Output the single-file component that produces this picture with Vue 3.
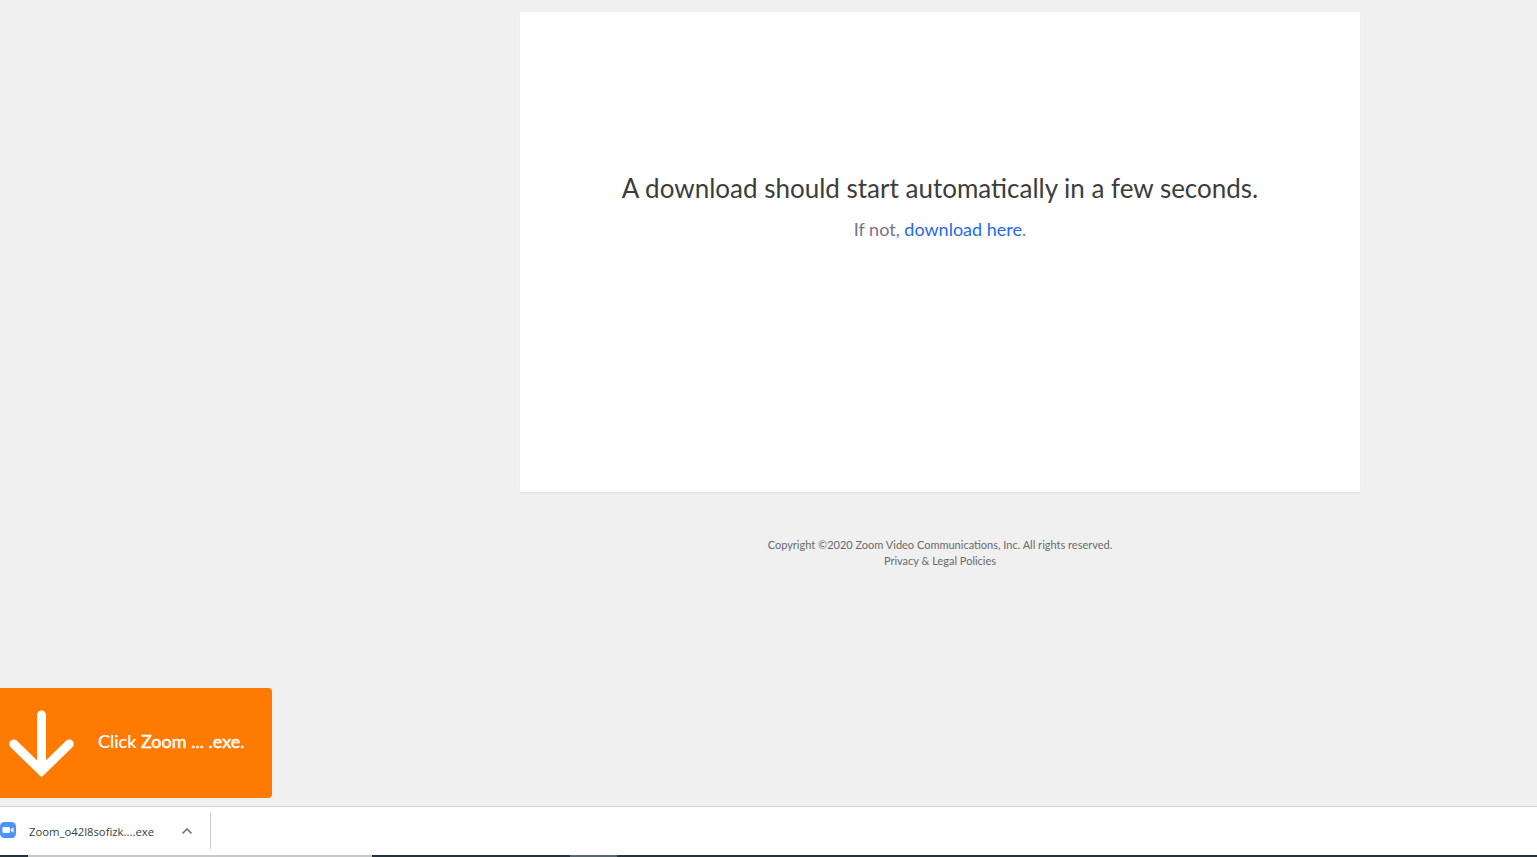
<script setup>
</script>

<template>
  <div class="page">
    <main class="main">
      <section class="card">
        <h1 class="title">A download should start automatically in a few seconds.</h1>
        <p class="sub">If not, <a class="link">download here</a>.</p>
      </section>
      <footer class="foot">
        <div>Copyright ©2020 Zoom Video Communications, Inc. All rights reserved.</div>
        <div>Privacy &amp; Legal Policies</div>
      </footer>
      <div class="banner">
        <svg class="arrow" width="66" height="68" viewBox="0 0 66 68">
          <path d="M32.500 6V60M4.800 35L32.500 62L60.200 35" fill="none" stroke="#fff" stroke-width="9" stroke-linecap="round" stroke-linejoin="miter"/>
        </svg>
        <span class="banner-text">Click <b class="bold">Zoom ... .exe.</b></span>
      </div>
    </main>
    <div class="shelf">
      <div class="item">
        <svg class="zoom-icon" width="16" height="16" viewBox="0 0 16 16">
          <rect width="16" height="16" rx="4.500" fill="#4a93f8"/>
          <rect x="2.500" y="5" width="7.500" height="6" rx="1.300" fill="#fff"/>
          <path d="M10.800 7.300L13.500 5.300V10.700L10.800 8.700Z" fill="#fff"/>
        </svg>
        <span class="fname">Zoom_o42l8sofizk....exe</span>
        <svg class="chev" width="12" height="8" viewBox="0 0 12 8">
          <path d="M1.500 6.500L6 2L10.500 6.500" fill="none" stroke="#757575" stroke-width="1.700"/>
        </svg>
      </div>
      <div class="sep"></div>
    </div>
    <div class="taskbar">
      <div class="seg dark w28"></div>
      <div class="seg light w344"></div>
      <div class="seg dark w198"></div>
      <div class="seg mid w47"></div>
      <div class="seg dark grow"></div>
    </div>
  </div>
</template>

<style scoped>
.page {
  position: relative;
  width: 1537px;
  height: 857px;
  display: flex;
  flex-direction: column;
  overflow: hidden;
  background: #f0f0f0;
  font-family: Lato, "Open Sans", sans-serif;
}
.main {
  position: relative;
  flex: 1;
  padding: 12px 177px 0 520px;
  box-sizing: border-box;
}
.card {
  height: 480px;
  background: #fff;
  box-shadow: 0 1px 1px rgba(0, 0, 0, 0.05);
  display: flex;
  flex-direction: column;
  align-items: center;
  padding-top: 158px;
  box-sizing: border-box;
}
.title {
  margin: 0;
  font-size: 26px;
  line-height: 36px;
  font-weight: 400;
  color: #3d3d3d;
}
.sub {
  margin: 11px 0 0;
  font-size: 18px;
  line-height: 24px;
  color: #747487;
}
.link {
  color: #1f6aeb;
}
.foot {
  margin-top: 45px;
  text-align: center;
  font-size: 11px;
  line-height: 16px;
  color: #6a6a6a;
}
.banner {
  position: absolute;
  left: 0;
  bottom: 8px;
  width: 272px;
  height: 110px;
  background: #ff7a00;
  border-radius: 0 4px 4px 0;
  display: flex;
  align-items: center;
  color: #fff;
}
.arrow {
  margin-left: 9px;
  flex: none;
}
.banner-text {
  margin-left: 23px;
  margin-bottom: 4px;
  font-size: 18px;
  -webkit-text-stroke: 0.2px #fff;
}
.bold {
  font-weight: 400;
  -webkit-text-stroke: 0.45px #fff;
}
.shelf {
  height: 49px;
  flex: none;
  background: #fff;
  border-top: 1px solid #d0d0d0;
  box-sizing: border-box;
  display: flex;
  align-items: center;
}
.item {
  width: 210px;
  display: flex;
  align-items: center;
}
.zoom-icon {
  flex: none;
  margin-top: -2px;
}
.fname {
  margin-left: 13px;
  font-family: "Open Sans", sans-serif;
  font-size: 11.300px;
  color: #3c4043;
  width: 152px;
  flex: none;
}
.chev {
  flex: none;
  margin-top: -1px;
}
.sep {
  width: 1px;
  height: 36px;
  background: #ccc;
}
.taskbar {
  height: 2px;
  flex: none;
  display: flex;
}
.seg { height: 2px; }
.dark { background: #24343e; }
.light { background: #c8c8c8; }
.mid { background: #5a666e; }
.w28 { width: 28px; }
.w344 { width: 344px; }
.w198 { width: 198px; }
.w47 { width: 47px; }
.grow { flex: 1; }
</style>
